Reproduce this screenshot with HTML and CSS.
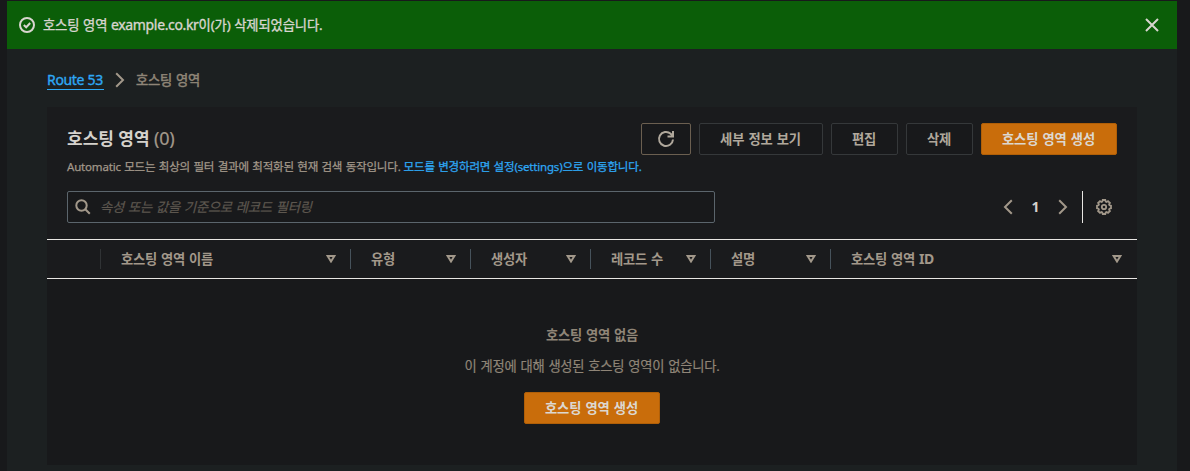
FILE: index.html
```html
<!DOCTYPE html>
<html lang="ko">
<head>
<meta charset="utf-8">
<title>Route 53</title>
<link rel="stylesheet" href="styles.css">
</head>
<body>
<main class="content">
  <div class="flash">
    <svg class="flash-icon" width="16" height="16" viewBox="0 0 16 16"><circle cx="8" cy="8" r="7"/><path d="M4.800 8l2.400 2.300 4-4.300"/></svg>
    <span class="flash-text">호스팅 영역 <span class="latin">example.co.kr</span>이(가) 삭제되었습니다.</span>
    <svg class="flash-close" width="14" height="14" viewBox="0 0 14 14"><path d="M1 1l12 12M13 1L1 13"/></svg>
  </div>
  <nav class="breadcrumb">
    <a class="crumb-link">Route 53</a>
    <svg class="crumb-sep" width="10" height="16" viewBox="0 0 10 16"><path d="M1.200 1.200L8 8l-6.800 6.800"/></svg>
    <span class="crumb-current">호스팅 영역</span>
  </nav>
  <section class="card">
    <header class="card-header">
      <div class="heading">
        <h1 class="title">호스팅 영역 <span class="count">(0)</span></h1>
        <p class="description"><span class="desc-text">Automatic 모드는 최상의 필터 결과에 최적화된 현재 검색 동작입니다.</span><a class="desc-link">모드를 변경하려면 설정(settings)으로 이동합니다.</a></p>
      </div>
      <div class="actions">
        <button class="button button-refresh"><svg width="18" height="18" viewBox="0 0 18 18"><path d="M16 9.500a7 7 0 1 1-2.300-5.700L15.500 6"/><path d="M16 1v5.500h-5.500"/></svg></button>
        <button class="button button-details">세부 정보 보기</button>
        <button class="button button-small">편집</button>
        <button class="button button-small">삭제</button>
        <button class="button button-primary">호스팅 영역 생성</button>
      </div>
    </header>
    <div class="tools">
      <div class="search">
        <svg width="16" height="16" viewBox="0 0 16 16"><circle cx="6.500" cy="6.500" r="5.200"/><path d="M10.300 10.300l4.500 4.500"/></svg>
        <span class="placeholder">속성 또는 값을 기준으로 레코드 필터링</span>
      </div>
      <div class="pager">
        <svg width="10" height="16" viewBox="0 0 10 16"><path d="M8.800 1.200L2 8l6.800 6.800"/></svg>
        <span class="page">1</span>
        <svg width="10" height="16" viewBox="0 0 10 16"><path d="M1.200 1.200L8 8l-6.800 6.800"/></svg>
      </div>
      <div class="settings">
        <svg class="gear" width="16" height="16" viewBox="0 0 16 16"><path d="M6.700 1h2.600l.4 1.500 1 .4 1.300-.8 1.900 1.900-.8 1.300.4 1 1.500.4v2.600l-1.500.4-.4 1 .8 1.300-1.900 1.900-1.300-.8-1 .4-.4 1.500H6.700l-.4-1.500-1-.4-1.300.8L2.100 12l.8-1.300-.4-1L1 9.300V6.700l1.500-.4.4-1L2.100 4 4 2.100l1.300.8 1-.4z"/><circle cx="8" cy="8" r="2.200"/></svg>
      </div>
    </div>
    <div class="columns">
      <div class="column column-select"></div>
      <div class="column"><span>호스팅 영역 이름</span><svg width="10" height="8" viewBox="0 0 10 8"><path d="M1.600 1h6.800L5 6.500z"/></svg></div>
      <div class="column"><span>유형</span><svg width="10" height="8" viewBox="0 0 10 8"><path d="M1.600 1h6.800L5 6.500z"/></svg></div>
      <div class="column"><span>생성자</span><svg width="10" height="8" viewBox="0 0 10 8"><path d="M1.600 1h6.800L5 6.500z"/></svg></div>
      <div class="column"><span>레코드 수</span><svg width="10" height="8" viewBox="0 0 10 8"><path d="M1.600 1h6.800L5 6.500z"/></svg></div>
      <div class="column"><span>설명</span><svg width="10" height="8" viewBox="0 0 10 8"><path d="M1.600 1h6.800L5 6.500z"/></svg></div>
      <div class="column"><span>호스팅 영역 <span class="latin">ID</span></span><svg width="10" height="8" viewBox="0 0 10 8"><path d="M1.600 1h6.800L5 6.500z"/></svg></div>
    </div>
    <div class="empty">
      <strong class="empty-title">호스팅 영역 없음</strong>
      <span class="empty-text">이 계정에 대해 생성된 호스팅 영역이 없습니다.</span>
      <button class="button button-primary">호스팅 영역 생성</button>
    </div>
  </section>
</main>
</body>
</html>
```
FILE: styles.css
```css
* { box-sizing: border-box; }
body {
  margin: 0;
  height: 471px;
  overflow: hidden;
  padding: 1px 13px 0 7px;
  background: #18191b;
  color: #a2988a;
  font: 13.300px/20px "Noto Sans", "Noto Sans CJK KR", sans-serif;
  letter-spacing: -0.25px;
  word-spacing: 0.8px;
}
svg { display: block; flex: none; fill: none; stroke: currentColor; stroke-width: 2; }
.latin { font-size: 14px; line-height: 1; letter-spacing: -0.5px; }
.content { height: 470px; background: #1c2021; }
.flash {
  display: flex;
  align-items: center;
  height: 48px;
  padding: 0 18px 0 12px;
  background: #0b5e08;
  color: #d8d5cf;
}
.flash-text { margin-left: 8px; padding-bottom: 1px; white-space: nowrap; letter-spacing: -0.12px; word-spacing: 0.4px; -webkit-text-stroke: 0.35px; }
.flash-text .latin { letter-spacing: -0.35px; }
.flash-close { margin-left: auto; }
.breadcrumb { display: flex; align-items: center; height: 58px; padding: 4px 40px 0; -webkit-text-stroke: 0.35px; }
.crumb-link { width: 57px; color: #2ea8f5; font-size: 14px; line-height: 18px; letter-spacing: -0.32px; word-spacing: 0; white-space: nowrap; border-bottom: 1px solid #2ea8f5; }
.crumb-sep { margin: 0 11px; }
.crumb-current { padding-bottom: 1px; color: #8f8577; -webkit-text-stroke: 0.5px; }
.card { height: 358px; margin: 0 40px; background: #1a1b1d; }
.card-header { display: flex; justify-content: space-between; height: 84px; padding: 16px 20px 0; }
.heading { flex: 1; min-width: 0; white-space: nowrap; }
.title { margin: 5px 0 7px; color: #d5d2cc; font-size: 17px; line-height: 22px; font-weight: 700; letter-spacing: 0; word-spacing: 0; }
.count { color: #a2988a; font-size: 18px; line-height: 1; font-weight: 400; letter-spacing: -0.3px; -webkit-text-stroke: 0.2px; }
.description { display: flex; gap: 3px; margin: 0; font-size: 11.500px; line-height: 20px; letter-spacing: -0.18px; word-spacing: 0.600px; -webkit-text-stroke: 0.25px; }
.desc-link { color: #2ea8f5; }
.actions { display: flex; gap: 8px; }
.button {
  display: flex;
  align-items: center;
  justify-content: center;
  flex: none;
  height: 32px;
  padding: 0 1px 1px 0;
  border: 1px solid #35383a;
  border-radius: 2px;
  background: #18191b;
  color: #b0a89c;
  font: inherit;
  font-weight: 700;
  letter-spacing: -0.12px;
  word-spacing: inherit;
  white-space: nowrap;
}
.button-refresh { width: 50px; padding: 0; border-color: #6b5f50; }
.button-details { width: 124px; }
.button-small { width: 67px; }
.button-primary { width: 136px; border-color: #b05f08; background: #c96d0b; color: #dcd8d1; }
.tools { display: flex; align-items: center; height: 32px; padding: 0 25px 0 20px; }
.search {
  display: flex;
  align-items: center;
  gap: 9px;
  width: 648px;
  height: 32px;
  padding-left: 7px;
  border: 1px solid #5b656c;
  border-radius: 2px;
  background: #18191b;
}
.placeholder { padding-bottom: 1px; color: #5d574f; font-style: italic; -webkit-text-stroke: 0.2px; }
.pager { display: flex; align-items: center; margin-left: auto; color: #a2988a; }
.page { width: 45px; text-align: center; color: #d5d2cc; font-size: 14px; font-weight: 700; }
.settings { display: flex; align-items: center; height: 32px; margin-left: 14px; padding-left: 13px; border-left: 1px solid #e8e6e3; }
.gear { stroke-width: 1.8; }
.columns {
  display: grid;
  grid-template-columns: 54px 250px 120px 120px 120px 120px 306px;
  align-items: center;
  height: 40px;
  margin-top: 16px;
  border: solid #e8e6e3;
  border-width: 1px 0;
  font-weight: 700;
}
.column { display: flex; align-items: center; justify-content: space-between; height: 20px; padding: 0 14px 0 20px; border-right: 1px solid #46525b; white-space: nowrap; }
.column > span { padding-bottom: 1px; }
.column-select { border-color: #303335; }
.column:last-child { border-right: 0; padding-right: 15px; }
.empty { display: flex; flex-direction: column; align-items: center; padding-top: 46px; background: #18191b; height: 186px; color: #8f8577; }
.empty-title { font-weight: 700; }
.empty-text { margin: 11px 0 16px; -webkit-text-stroke: 0.2px; }
```
